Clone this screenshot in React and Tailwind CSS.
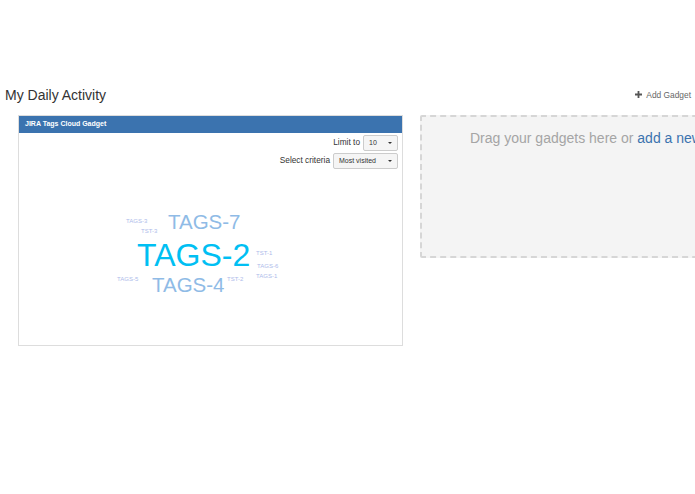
const tags = [
  { label: "TAGS-3", left: 107, top: 49, size: "text-[6px]", color: "text-[#adbbea]" },
  { label: "TST-3", left: 122, top: 59, size: "text-[6px]", color: "text-[#adbbea]" },
  { label: "TAGS-7", left: 149, top: 43, size: "text-[20.5px]", color: "text-[#8fbbe6]" },
  { label: "TAGS-2", left: 118, top: 70, size: "text-[32px]", color: "text-[#00bff3]" },
  { label: "TST-1", left: 237, top: 81, size: "text-[6px]", color: "text-[#adbbea]" },
  { label: "TAGS-6", left: 238, top: 94, size: "text-[6px]", color: "text-[#adbbea]" },
  { label: "TAGS-1", left: 237, top: 104, size: "text-[6px]", color: "text-[#adbbea]" },
  { label: "TAGS-5", left: 98, top: 107, size: "text-[6px]", color: "text-[#adbbea]" },
  { label: "TST-2", left: 208, top: 107, size: "text-[6px]", color: "text-[#adbbea]" },
  { label: "TAGS-4", left: 133, top: 106, size: "text-[20.5px]", color: "text-[#8fbbe6]" },
];

function Select({ value, width }) {
  return (
    <div className={`flex h-[16px] items-center justify-between rounded-[2px] border border-[#ccc] bg-[#f5f5f5] px-[5px] text-[7px] text-[#333] ${width}`}>
      <span>{value}</span>
      <span className="h-0 w-0 border-x-[2px] border-t-[2px] border-x-transparent border-t-[#333]" />
    </div>
  );
}

export default function App() {
  return (
    <div className="h-[494px] w-[695px] overflow-hidden bg-white pt-[85px] font-['Liberation_Sans',Arial,sans-serif]">
      <div className="flex h-[20px] items-center justify-between pl-[5px] pr-[4px]">
        <h1 className="text-[14px] font-normal text-[#333]">My Daily Activity</h1>
        <div className="flex items-center gap-[4px] text-[8.4px] text-[#666]">
          <svg width="7" height="7" viewBox="0 0 7 7" className="fill-[#555]">
            <path d="M2.6 0h1.8v2.6H7v1.8H4.4V7H2.6V4.4H0V2.6h2.6z" />
          </svg>
          <span>Add Gadget</span>
        </div>
      </div>

      <div className="mt-[10px] flex items-start pl-[18px]">
        <section className="h-[231px] w-[385px] shrink-0 border border-[#ddd]">
          <div className="flex h-[17px] items-center bg-[#3b73af] pl-[6px] text-[7px] font-bold text-white">
            JIRA Tags Cloud Gadget
          </div>
          <div className="flex flex-col items-end gap-[2px] pr-[4px] pt-[2px]">
            <div className="flex items-center gap-[3px] text-[8.3px] text-[#333]">
              <span className="-translate-y-[1px]">Limit to</span>
              <Select value="10" width="w-[35px]" />
            </div>
            <div className="flex items-center gap-[3px] text-[8.3px] text-[#333]">
              <span className="-translate-y-[1px]">Select criteria</span>
              <Select value="Most visited" width="w-[65px]" />
            </div>
          </div>
          <div className="relative">
            {tags.map((tag) => (
              <span
                key={tag.label}
                className={`absolute whitespace-nowrap leading-none ${tag.size} ${tag.color}`}
                style={{ left: tag.left, top: tag.top }}
              >
                {tag.label}
              </span>
            ))}
          </div>
        </section>

        <section className="ml-[17px] h-[143px] w-[500px] shrink-0 rounded-[2px] border-2 border-dashed border-[#d6d6d6] bg-[#f4f4f4] pl-[48px] pt-[11px]">
          <p className="whitespace-nowrap text-[14px] text-[#a5a5a5]">
            Drag your gadgets here or <span className="text-[#3b73af]">add a new gadget</span>
          </p>
        </section>
      </div>
    </div>
  );
}
